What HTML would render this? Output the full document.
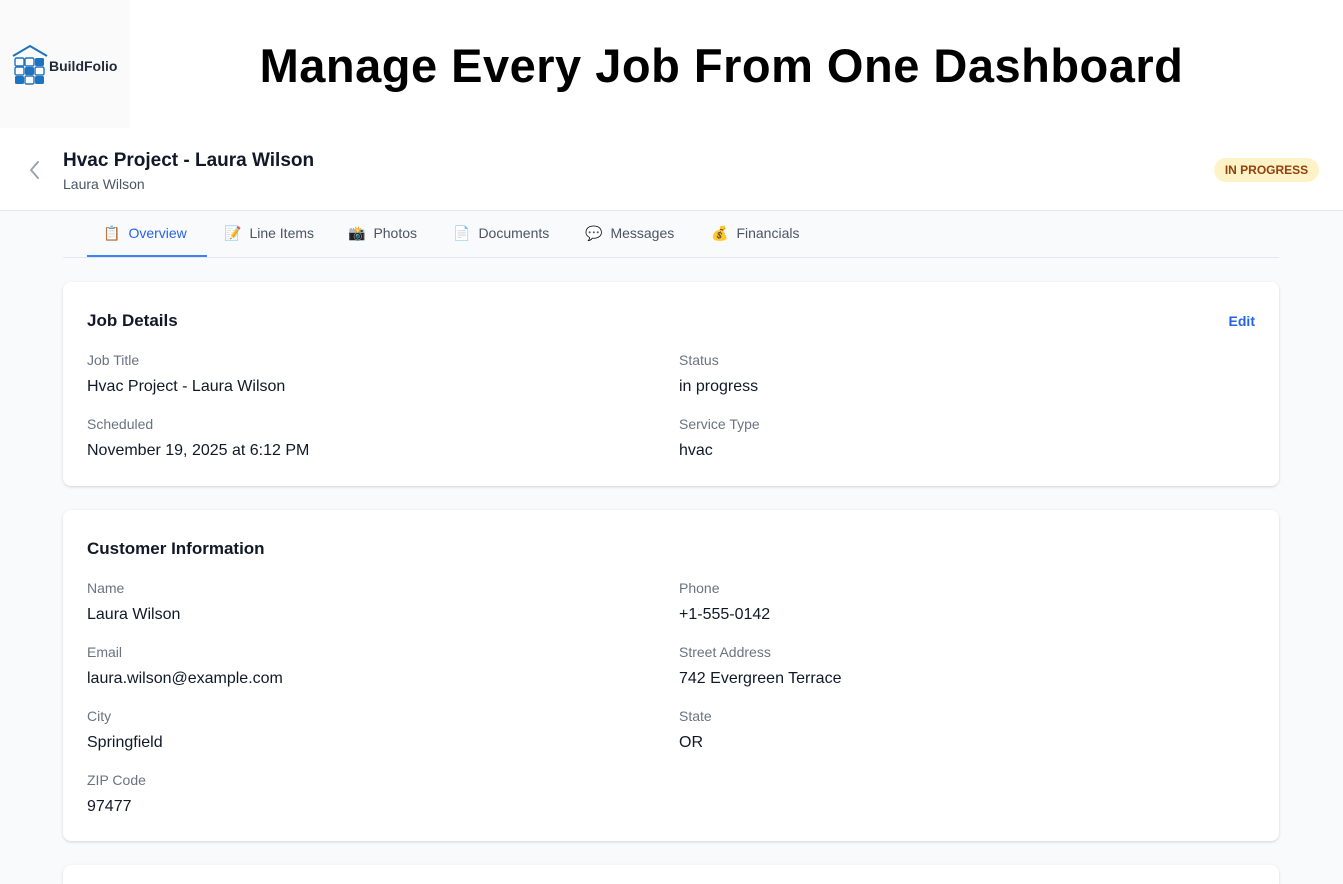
<!DOCTYPE html>
<html style="width:1343px;height:884px;overflow:hidden"><head><meta charset="utf-8"><style>
*{box-sizing:border-box;margin:0;padding:0}
body{width:1343px;height:884px;overflow:hidden;background:#f9fafb;font-family:"Liberation Sans",Arial,sans-serif;color:#111827;position:relative}
.top{position:absolute;left:0;top:0;width:1343px;height:130px;background:#fff}
.logo{position:absolute;left:0;top:0;width:130px;height:128px;background:#fafafa}
.logo span{position:absolute;left:49px;top:58px;font-size:14px;font-weight:bold;color:#1f2937}
h1{position:absolute;left:0;width:1443px;text-align:center;top:38px;font-size:47px;font-weight:bold;color:#000;letter-spacing:0.5px}
.hdr{position:absolute;top:130px;left:0;width:1343px;height:81px;background:#fff;border-bottom:1px solid #e5e7eb}
.back{position:absolute;left:28px;top:160px}
.t1{position:absolute;left:63px;top:150px;font-size:19px;font-weight:bold;color:#111827}
.t2{position:absolute;left:63px;top:176px;font-size:14px;color:#4b5563}
.badge{position:absolute;left:1214px;top:158px;width:105px;height:24px;border-radius:12px;background:#fef3c7;color:#92400e;font-size:12px;font-weight:bold;text-align:center;line-height:24px}
.tabs{position:absolute;left:63px;top:211px;width:1216px;height:47px;border-bottom:1px solid #e5e7eb}
.tab{position:absolute;top:14px;font-size:14px;color:#4b5563;white-space:nowrap}
.tab i{font-style:normal;font-size:14px;margin-right:8px;font-family:"DejaVu Sans",sans-serif}
.tab.a{color:#2563eb}
.ul{position:absolute;left:24px;top:44px;width:120px;height:2px;background:#3b82f6}
.card{position:absolute;left:63px;width:1216px;background:#fff;border-radius:8px;box-shadow:0 1px 3px rgba(0,0,0,.1),0 1px 2px rgba(0,0,0,.06)}
.card h2{position:absolute;left:24px;font-size:17px;font-weight:bold;color:#111827}
.l{position:absolute;font-size:14px;color:#6b7280}
.v{position:absolute;font-size:16px;color:#111827}
.edit{position:absolute;right:24px;top:31px;font-size:14px;color:#2563eb;font-weight:bold}
</style></head><body>
<div class="top"></div>
<div class="logo">
<svg style="position:absolute;left:12px;top:44px" width="36" height="42" viewBox="0 0 36 42">
<path d="M1 12 L18 2 L35 12" fill="none" stroke="#1e73be" stroke-width="2"/>
<g fill="none" stroke="#1e73be" stroke-width="1.4">
<rect x="3" y="14" width="9" height="8" rx="1.5"/><rect x="13" y="14" width="9" height="8" rx="1.5"/>
<rect x="3" y="23" width="9" height="8" rx="1.5"/><rect x="23" y="23" width="9" height="8" rx="1.5"/>
<rect x="13" y="32" width="9" height="8" rx="1.5"/></g>
<g fill="#1e73be"><rect x="23" y="14" width="9" height="8" rx="1.5"/><rect x="13" y="23" width="9" height="8" rx="1.5"/>
<rect x="3" y="32" width="9" height="8" rx="1.5"/><rect x="23" y="32" width="9" height="8" rx="1.5"/></g>
</svg>
<span>BuildFolio</span></div>
<h1>Manage Every Job From One Dashboard</h1>
<div class="hdr"></div>
<svg class="back" width="14" height="20" viewBox="0 0 14 20"><path d="M10 2 L3 10 L10 18" fill="none" stroke="#9ca3af" stroke-width="2" stroke-linecap="round" stroke-linejoin="round"/></svg>
<div class="t1">Hvac Project - Laura Wilson</div>
<div class="t2">Laura Wilson</div>
<div class="badge">IN PROGRESS</div>
<div class="tabs">
<div class="tab a" style="left:40px"><i>📋</i>Overview</div>
<div class="tab" style="left:161px"><i>📝</i>Line Items</div>
<div class="tab" style="left:285px"><i>📸</i>Photos</div>
<div class="tab" style="left:390px"><i>📄</i>Documents</div>
<div class="tab" style="left:522px"><i>💬</i>Messages</div>
<div class="tab" style="left:648px"><i>💰</i>Financials</div>
<div class="ul"></div>
</div>
<div class="card" style="top:282px;height:204px">
<h2 style="top:29px">Job Details</h2><div class="edit">Edit</div>
<div class="l" style="left:24px;top:70px">Job Title</div><div class="v" style="left:24px;top:96px">Hvac Project - Laura Wilson</div>
<div class="l" style="left:616px;top:70px">Status</div><div class="v" style="left:616px;top:96px">in progress</div>
<div class="l" style="left:24px;top:134px">Scheduled</div><div class="v" style="left:24px;top:160px">November 19, 2025 at 6:12 PM</div>
<div class="l" style="left:616px;top:134px">Service Type</div><div class="v" style="left:616px;top:160px">hvac</div>
</div>
<div class="card" style="top:510px;height:331px">
<h2 style="top:29px">Customer Information</h2>
<div class="l" style="left:24px;top:70px">Name</div><div class="v" style="left:24px;top:96px">Laura Wilson</div>
<div class="l" style="left:616px;top:70px">Phone</div><div class="v" style="left:616px;top:96px">+1-555-0142</div>
<div class="l" style="left:24px;top:134px">Email</div><div class="v" style="left:24px;top:160px">laura.wilson@example.com</div>
<div class="l" style="left:616px;top:134px">Street Address</div><div class="v" style="left:616px;top:160px">742 Evergreen Terrace</div>
<div class="l" style="left:24px;top:198px">City</div><div class="v" style="left:24px;top:224px">Springfield</div>
<div class="l" style="left:616px;top:198px">State</div><div class="v" style="left:616px;top:224px">OR</div>
<div class="l" style="left:24px;top:262px">ZIP Code</div><div class="v" style="left:24px;top:288px">97477</div>
</div>
<div class="card" style="top:865px;height:19px;border-radius:8px 8px 0 0"></div>
</body></html>
